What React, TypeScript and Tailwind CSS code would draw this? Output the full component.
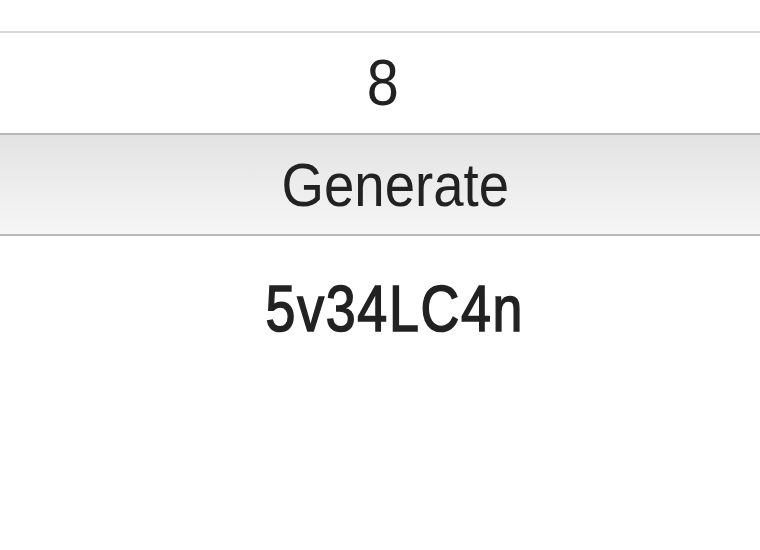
import React from "react";

export default function App() {
  return (
    <div className="w-[760px] h-[550px] overflow-hidden bg-white" style={{ fontFamily: '"Liberation Sans", Arial, sans-serif' }}>
      <div className="w-[790px]">
        <div className="h-[31px]" />
        <div className="border-t-2 border-[#d6d6d6] h-[102px] flex items-center justify-center pr-[24px]">
          <span className="text-[64px] leading-none text-[#222] scale-x-[0.9]">8</span>
        </div>
        <div className="border-t-2 border-b-2 border-[#b8b8b8] h-[103px] bg-gradient-to-b from-[#e3e3e3] to-[#f6f6f6] flex items-center justify-center">
          <span className="text-[62px] leading-none text-[#222] scale-x-[0.88]">Generate</span>
        </div>
        <div className="h-[145px] flex items-center justify-center">
          <span className="text-[64px] leading-none font-normal text-[#222] tracking-[2px] scale-x-[0.84] [-webkit-text-stroke-width:1.6px] [-webkit-text-stroke-color:#222]">5v34LC4n</span>
        </div>
      </div>
    </div>
  );
}
